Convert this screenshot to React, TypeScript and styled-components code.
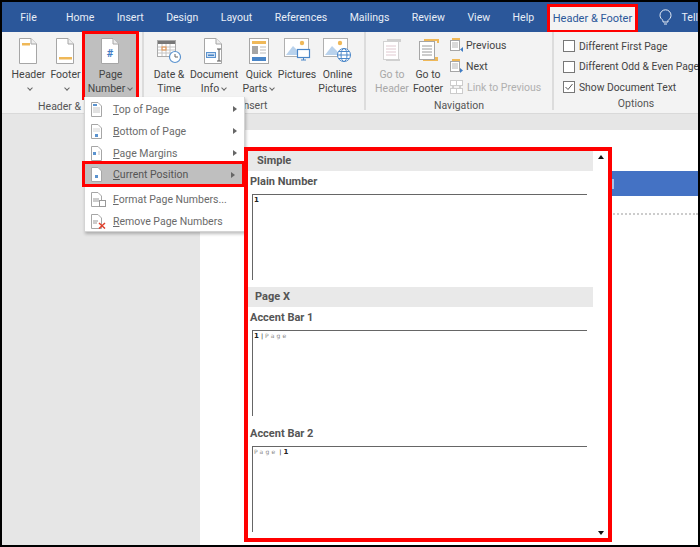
import React from 'react';
import styled, { createGlobalStyle } from 'styled-components';

const GlobalStyle = createGlobalStyle`
  html, body {
    margin: 0;
    padding: 0;
    background: #000;
  }
`;

const Frame = styled.div`
  position: relative;
  box-sizing: border-box;
  width: 700px;
  height: 547px;
  border: 2px solid #000;
  overflow: hidden;
  display: flex;
  flex-direction: column;
  font-family: Roboto, 'Liberation Sans', sans-serif;
  font-size: 10.5px;
  color: #444;
`;

const TabBar = styled.div`
  display: flex;
  align-items: stretch;
  height: 30px;
  flex: none;
  padding-left: 7px;
  background: #2b579a;
`;

const Tab = styled.div<{ $first?: boolean }>`
  display: flex;
  align-items: center;
  padding: 0 ${(p) => (p.$first ? '18px' : '11.25px')} 0 11.25px;
  color: #e8eef7;
  font-size: 10.5px;
  white-space: nowrap;
`;

const ActiveTab = styled.div`
  box-sizing: border-box;
  display: flex;
  align-items: center;
  justify-content: center;
  width: 103px;
  height: 28px;
  margin: 2px 0 0 2px;
  border: 3px solid #f00;
  border-bottom-width: 2px;
  background: #f3f3f3;
  color: #2b579a;
  font-size: 11px;
  white-space: nowrap;
`;

const TellMe = styled.div`
  display: flex;
  align-items: center;
  gap: 10px;
  margin-left: 21px;
  color: #e8eef7;
`;

const Ribbon = styled.div`
  display: flex;
  flex: none;
  height: 81px;
  background: #f3f3f3;
  border-bottom: 1px solid #d9d9d9;
`;

const Group = styled.div<{ $width: number }>`
  display: flex;
  flex-direction: column;
  flex: none;
  box-sizing: border-box;
  width: ${(p) => p.$width}px;
  border-right: 2px solid #dcdcdc;
  margin-bottom: 3px;
`;

const GroupBody = styled.div<{ $pad: number }>`
  display: flex;
  height: 65px;
  padding-left: ${(p) => p.$pad}px;
`;

const GroupLabel = styled.div<{ $offset?: number }>`
  padding: 3px 0 0 ${(p) => p.$offset ?? 0}px;
  text-align: center;
  line-height: 14px;
  font-size: 10.5px;
  color: #555;
  white-space: nowrap;
`;

const BigButton = styled.div<{ $width: number; $disabled?: boolean; $active?: boolean }>`
  box-sizing: border-box;
  flex: none;
  display: flex;
  flex-direction: column;
  align-items: center;
  width: ${(p) => p.$width}px;
  padding-top: 6px;
  color: ${(p) => (p.$disabled ? '#a8a8a8' : '#444')};
  ${(p) =>
    p.$active &&
    `
    height: 69px;
    margin: -1px 0 0 -2px;
    padding-top: 4px;
    border: 3px solid #f00;
    background: #bfbfbf;
  `}
`;

const IconBox = styled.div`
  display: flex;
  align-items: flex-start;
  justify-content: center;
  height: 30px;
`;

const Label = styled.div`
  line-height: 14px;
  font-size: 10.5px;
  text-align: center;
  white-space: nowrap;
`;

const Chevron = styled.span`
  display: inline-block;
  width: 3px;
  height: 3px;
  margin: 0 1px 2px 3px;
  border-right: 1px solid #666;
  border-bottom: 1px solid #666;
  transform: rotate(45deg);
`;

const SmallColumn = styled.div`
  display: flex;
  flex-direction: column;
  gap: 7px;
  padding: 6px 0 0 4px;
`;

const SmallButton = styled.div<{ $disabled?: boolean }>`
  display: flex;
  align-items: center;
  gap: 3px;
  height: 14px;
  font-size: 10.5px;
  white-space: nowrap;
  color: ${(p) => (p.$disabled ? '#b0b0b0' : '#444')};
`;

const OptionColumn = styled.div`
  display: flex;
  flex-direction: column;
  gap: 6.5px;
  padding-top: 7px;
`;

const OptionRow = styled.div`
  display: flex;
  align-items: center;
  gap: 4px;
  height: 14px;
  font-size: 10.3px;
  white-space: nowrap;
`;

const CheckBox = styled.span`
  box-sizing: border-box;
  display: flex;
  align-items: center;
  justify-content: center;
  width: 12px;
  height: 12px;
  border: 1px solid #777;
  background: #fff;
`;

const Workspace = styled.div`
  flex: 1;
  display: flex;
  padding: 16px 0 0 198px;
  background: #e6e6e6;
`;

const Page = styled.div`
  flex: 1;
  padding-top: 41px;
  background: #fff;
`;

const HeaderBand = styled.div`
  display: flex;
  align-items: center;
  height: 25px;
  margin-left: 50px;
  padding-left: 362px;
  background: #4472c4;
`;

const BandMark = styled.span`
  width: 2px;
  height: 10px;
  background: #a9c1e6;
`;

const DottedRule = styled.div`
  margin-top: 17px;
  margin-left: 50px;
  border-top: 2px dotted #ccc;
`;

const Menu = styled.div`
  position: absolute;
  left: 82px;
  top: 95px;
  box-sizing: border-box;
  width: 161px;
  height: 135px;
  padding-top: 1px;
  background: #fff;
  border: 1px solid #d4d4d4;
  border-width: 0 1px 1px 1px;
  box-shadow: 1px 2px 3px rgba(0, 0, 0, 0.25);
`;

const MenuRow = styled.div<{ $active?: boolean }>`
  box-sizing: border-box;
  display: flex;
  align-items: center;
  height: 22px;
  padding: 0 7px 0 5px;
  color: #6a6a6a;
  font-size: 10.5px;
  white-space: nowrap;
  ${(p) =>
    p.$active &&
    `
    position: relative;
    height: 26px;
    margin: -3px -1px -1px -3px;
    padding: 1px 7px 0 5px;
    border: 3px solid #f00;
    background: #bfbfbf;
    color: #555;
  `}
`;

const MenuIcon = styled.span`
  display: flex;
  justify-content: flex-start;
  width: 17px;
  margin-right: 6px;
`;

const MenuText = styled.span`
  flex: 1;
`;

const Mnemonic = styled.span`
  text-decoration: underline;
`;

const MenuArrow = styled.span`
  width: 0;
  height: 0;
  border-left: 4px solid #666;
  border-top: 3px solid transparent;
  border-bottom: 3px solid transparent;
`;

const MenuSeparator = styled.div`
  height: 2px;
`;

const Gallery = styled.div`
  position: absolute;
  left: 242px;
  top: 145px;
  box-sizing: border-box;
  width: 368px;
  height: 395px;
  display: grid;
  grid-template-columns: 345px 15px;
  border: 4px solid #f00;
  background: #fff;
`;

const GalleryList = styled.div`
  display: flex;
  flex-direction: column;
`;

const SectionHead = styled.div<{ $indent: number }>`
  flex: none;
  height: 20px;
  line-height: 20px;
  padding-left: ${(p) => p.$indent}px;
  background: #e9e9e9;
  color: #555;
  font-size: 11px;
  font-weight: 700;
`;

const Entry = styled.div`
  flex: none;
  margin-bottom: 7px;
`;

const EntryTitle = styled.div`
  height: 23px;
  line-height: 22px;
  padding-left: 2px;
  color: #555;
  font-size: 11px;
  font-weight: 700;
`;

const Preview = styled.div`
  box-sizing: border-box;
  height: 86px;
  margin: 0 6px 0 4px;
  padding: 1px 0 0 1px;
  border-top: 1px solid #666;
  border-left: 1px solid #666;
  font-family: 'DejaVu Sans', sans-serif;
  font-size: 6px;
  line-height: 8px;
`;

const PageNum = styled.b`
  color: #222;
  font-size: 7px;
`;

const PageWord = styled.span`
  color: #888;
  letter-spacing: 2.2px;
`;

const Bar = styled.b`
  margin: 0 2px;
  color: #555;
`;

const ScrollColumn = styled.div`
  display: flex;
  flex-direction: column;
  justify-content: space-between;
  align-items: center;
  padding: 4px 0 4px;
`;

const ScrollArrow = styled.span<{ $down?: boolean }>`
  width: 0;
  height: 0;
  border-left: 3.5px solid transparent;
  border-right: 3.5px solid transparent;
  ${(p) => (p.$down ? 'border-top: 4px solid #111;' : 'border-bottom: 4px solid #111;')}
`;

const sheet = { fill: '#fff', stroke: '#a6a6a6', strokeWidth: 1 };

const DocShape = ({ w = 18, h = 26 }: { w?: number; h?: number }) => (
  <>
    <path d={`M.5 .5H${w - 6}L${w - 0.5} 6V${h - 0.5}H.5Z`} {...sheet} />
    <path d={`M${w - 6} .5V6H${w - 0.5}`} fill="#eee" stroke="#a6a6a6" />
  </>
);

const HeaderIcon = () => (
  <svg width="19" height="27">
    <DocShape />
    <rect x="3" y="5" width="8" height="2.5" fill="#efb858" />
  </svg>
);

const FooterIcon = () => (
  <svg width="19" height="27">
    <DocShape />
    <rect x="3" y="19" width="13" height="2.5" fill="#efb858" />
  </svg>
);

const PageNumberIcon = () => (
  <svg width="19" height="27">
    <DocShape />
    <text x="9" y="19" textAnchor="middle" fontSize="11" fontWeight="700" fontFamily="Roboto" fill="#3f7cc4">
      #
    </text>
  </svg>
);

const CalendarIcon = () => (
  <svg width="25" height="27">
    <rect x=".5" y="2.5" width="18" height="16" fill="#fff" stroke="#aaa" />
    <rect x="1" y="3" width="17" height="3" fill="#777" />
    <path d="M1 9H18M1 12H18M1 15H18M5 6V18M9 6V18M13 6V18" stroke="#c4c4c4" />
    <rect x="5" y="9" width="4" height="3" fill="none" stroke="#e9934a" />
    <circle cx="18" cy="19" r="5.5" fill="#fff" stroke="#5b93cf" strokeWidth="1.2" />
    <path d="M18 16V19H21" fill="none" stroke="#666" />
  </svg>
);

const DocInfoIcon = () => (
  <svg width="20" height="27">
    <DocShape />
    <rect x="2.5" y="14.5" width="9" height="5" fill="#cfe0f3" stroke="#5b93cf" />
    <rect x="4" y="16.5" width="6" height="1.5" fill="#4a86c8" />
    <path d="M15 11V23M13 11H17M13 23H17" stroke="#555" fill="none" />
  </svg>
);

const QuickPartsIcon = () => (
  <svg width="21" height="27">
    <rect x=".5" y=".5" width="19" height="25" fill="#fff" stroke="#a6a6a6" />
    <rect x="3" y="3" width="14" height="3" fill="#efb858" />
    <rect x="3" y="8" width="6" height="8" fill="#a6a6a6" />
    <path d="M11 9H17M11 12H17M11 15H17" stroke="#bbb" />
    <rect x="3" y="19" width="14" height="4" fill="#4a86c8" />
  </svg>
);

const PicturesIcon = () => (
  <svg width="27" height="25">
    <rect x=".5" y=".5" width="24" height="18" fill="#fff" stroke="#b0b0b0" />
    <circle cx="18" cy="5" r="2.2" fill="#efb858" />
    <path d="M2 17L9 8L14 13L17 17Z" fill="#b9d2ec" />
    <rect x="13.5" y="11.5" width="12" height="8" fill="#fff" stroke="#4a86c8" strokeWidth="1.2" />
    <path d="M17 22H22M19.5 20V22" stroke="#4a86c8" />
  </svg>
);

const OnlinePicturesIcon = () => (
  <svg width="30" height="25">
    <rect x=".5" y=".5" width="24" height="18" fill="#fff" stroke="#b0b0b0" />
    <circle cx="17" cy="5" r="2.2" fill="#efb858" />
    <path d="M2 17L9 8L14 13L17 17Z" fill="#b9d2ec" />
    <circle cx="21" cy="17" r="6.5" fill="#fff" stroke="#4a86c8" />
    <ellipse cx="21" cy="17" rx="3" ry="6.5" fill="none" stroke="#4a86c8" />
    <path d="M14.5 17H27.5M16 13.5H26M16 20.5H26" stroke="#4a86c8" fill="none" />
  </svg>
);

const GoToIcon = ({ muted }: { muted?: boolean }) => {
  const edge = muted ? '#d2d2d2' : '#a6a6a6';
  const strip = muted ? '#d0d0d0' : '#efb858';
  const line = muted ? '#e0c9d0' : '#9a9a9a';
  return (
    <svg width="21" height="25">
      {muted ? (
        <rect x="5" y="1" width="14" height="3" fill={strip} />
      ) : (
        <rect x="5" y="19" width="15" height="4" fill={strip} />
      )}
      {!muted && <path d="M6 2H20V5" fill="none" stroke={strip} strokeWidth="2" />}
      <rect x="1.5" y="3.5" width="15" height="18" fill="#fff" stroke={edge} />
      <path d="M4 8H14M4 11H14M4 14H14M4 17H14" stroke={line} />
      {muted && <rect x="4" y="21" width="14" height="2" fill={strip} />}
    </svg>
  );
};

const PrevNextIcon = ({ down }: { down?: boolean }) => (
  <svg width="13" height="14">
    <rect x="2" y="0" width="8" height="3" fill="#efb858" />
    <rect x=".5" y="2.5" width="9" height="10" fill="#fff" stroke="#a6a6a6" />
    <path d="M2 5H8M2 7H8M2 9H8" stroke="#b5b5b5" />
    <path d={down ? 'M10 9L13 11.5L10 14Z' : 'M13 9L10 11.5L13 14Z'} fill="#3f7cc4" />
  </svg>
);

const LinkIcon = () => (
  <svg width="14" height="14">
    <rect x=".5" y=".5" width="12" height="5" fill="#fff" stroke="#ccc" />
    <rect x=".5" y="8.5" width="12" height="5" fill="#fff" stroke="#ccc" />
    <path d="M6.5 1V5M6.5 9V13" stroke="#ccc" />
    <path d="M3 6V8M10 6V8" stroke="#aaa" />
  </svg>
);

const BulbIcon = () => (
  <svg width="13" height="17" fill="none" stroke="#e8eef7">
    <path d="M4 11.5C2.5 10 1 8.8 1 6.3A5.5 5.5 0 0 1 12 6.3C12 8.8 10.5 10 9 11.5V13H4Z" />
    <path d="M5 15H8" />
  </svg>
);

const MiniDoc = ({ kind }: { kind: 'top' | 'bottom' | 'side' | 'mid' | 'format' | 'remove' }) => (
  <svg width="17" height="15">
    <path d="M1.5 .5H8L11.5 4V14.5H1.5Z" fill="#fff" stroke="#a6a6a6" />
    {kind === 'top' && (
      <>
        <rect x="3" y="2" width="4" height="2" fill="#5b93cf" />
        <path d="M3 6H10M3 8H10M3 10H10" stroke="#c4c4c4" />
      </>
    )}
    {kind === 'bottom' && (
      <>
        <path d="M3 5H10M3 7H10" stroke="#d4d4d4" />
        <rect x="5" y="10" width="3" height="3" fill="#5b93cf" />
      </>
    )}
    {kind === 'side' && (
      <>
        <rect x="3" y="6" width="3" height="3" fill="#5b93cf" />
        <path d="M8 6H10M8 8H10" stroke="#c4c4c4" />
      </>
    )}
    {kind === 'mid' && <rect x="5" y="8" width="3" height="3" fill="#5b93cf" />}
    {kind === 'format' && (
      <>
        <path d="M3 7H9M3 9H9" stroke="#999" />
        <rect x="9.5" y="8.5" width="6" height="6" fill="#fff" stroke="#999" />
      </>
    )}
    {kind === 'remove' && (
      <>
        <path d="M3 7H8M3 9H7" stroke="#999" />
        <path d="M9 9L15 14.5M15 9L9 14.5" stroke="#e0402c" strokeWidth="1.5" />
      </>
    )}
  </svg>
);

const tabs = ['Home', 'Insert', 'Design', 'Layout', 'References', 'Mailings', 'Review', 'View', 'Help'];

const App = () => {
  return (
    <Frame>
      <GlobalStyle />
      <TabBar>
        <Tab $first>File</Tab>
        {tabs.map((t) => (
          <Tab key={t}>{t}</Tab>
        ))}
        <ActiveTab>Header &amp; Footer</ActiveTab>
        <TellMe>
          <BulbIcon />
          Tell
        </TellMe>
      </TabBar>

      <Ribbon>
        <Group $width={142}>
          <GroupBody $pad={8}>
            <BigButton $width={37}>
              <IconBox>
                <HeaderIcon />
              </IconBox>
              <Label>Header</Label>
              <Label>
                <Chevron />
              </Label>
            </BigButton>
            <BigButton $width={37}>
              <IconBox>
                <FooterIcon />
              </IconBox>
              <Label>Footer</Label>
              <Label>
                <Chevron />
              </Label>
            </BigButton>
            <BigButton $width={57} $active>
              <IconBox>
                <PageNumberIcon />
              </IconBox>
              <Label>Page</Label>
              <Label>
                Number
                <Chevron />
              </Label>
            </BigButton>
          </GroupBody>
          <GroupLabel $offset={8}>Header &amp; Footer</GroupLabel>
        </Group>

        <Group $width={222}>
          <GroupBody $pad={6}>
            <BigButton $width={38}>
              <IconBox>
                <CalendarIcon />
              </IconBox>
              <Label>Date &amp;</Label>
              <Label>Time</Label>
            </BigButton>
            <BigButton $width={52}>
              <IconBox>
                <DocInfoIcon />
              </IconBox>
              <Label>Document</Label>
              <Label>
                Info
                <Chevron />
              </Label>
            </BigButton>
            <BigButton $width={38}>
              <IconBox>
                <QuickPartsIcon />
              </IconBox>
              <Label>Quick</Label>
              <Label>
                Parts
                <Chevron />
              </Label>
            </BigButton>
            <BigButton $width={38}>
              <IconBox>
                <PicturesIcon />
              </IconBox>
              <Label>Pictures</Label>
            </BigButton>
            <BigButton $width={43}>
              <IconBox>
                <OnlinePicturesIcon />
              </IconBox>
              <Label>Online</Label>
              <Label>Pictures</Label>
            </BigButton>
          </GroupBody>
          <GroupLabel>Insert</GroupLabel>
        </Group>

        <Group $width={188}>
          <GroupBody $pad={8}>
            <BigButton $width={36} $disabled>
              <IconBox>
                <GoToIcon muted />
              </IconBox>
              <Label>Go to</Label>
              <Label>Header</Label>
            </BigButton>
            <BigButton $width={36}>
              <IconBox>
                <GoToIcon />
              </IconBox>
              <Label>Go to</Label>
              <Label>Footer</Label>
            </BigButton>
            <SmallColumn>
              <SmallButton>
                <PrevNextIcon />
                Previous
              </SmallButton>
              <SmallButton>
                <PrevNextIcon down />
                Next
              </SmallButton>
              <SmallButton $disabled>
                <LinkIcon />
                Link to Previous
              </SmallButton>
            </SmallColumn>
          </GroupBody>
          <GroupLabel>Navigation</GroupLabel>
        </Group>

        <Group $width={166}>
          <GroupBody $pad={9}>
            <OptionColumn>
              <OptionRow>
                <CheckBox />
                Different First Page
              </OptionRow>
              <OptionRow>
                <CheckBox />
                Different Odd &amp; Even Page
              </OptionRow>
              <OptionRow>
                <CheckBox>
                  <svg width="10" height="10" fill="none" stroke="#555">
                    <path d="M1.5 5L4 7.5L8.5 2" />
                  </svg>
                </CheckBox>
                Show Document Text
              </OptionRow>
            </OptionColumn>
          </GroupBody>
          <GroupLabel>Options</GroupLabel>
        </Group>
      </Ribbon>

      <Workspace>
        <Page>
          <HeaderBand>
            <BandMark />
          </HeaderBand>
          <DottedRule />
        </Page>
      </Workspace>

      <Menu>
        <MenuRow>
          <MenuIcon>
            <MiniDoc kind="top" />
          </MenuIcon>
          <MenuText>
            <Mnemonic>T</Mnemonic>op of Page
          </MenuText>
          <MenuArrow />
        </MenuRow>
        <MenuRow>
          <MenuIcon>
            <MiniDoc kind="bottom" />
          </MenuIcon>
          <MenuText>
            <Mnemonic>B</Mnemonic>ottom of Page
          </MenuText>
          <MenuArrow />
        </MenuRow>
        <MenuRow>
          <MenuIcon>
            <MiniDoc kind="side" />
          </MenuIcon>
          <MenuText>
            <Mnemonic>P</Mnemonic>age Margins
          </MenuText>
          <MenuArrow />
        </MenuRow>
        <MenuRow $active>
          <MenuIcon>
            <MiniDoc kind="mid" />
          </MenuIcon>
          <MenuText>
            <Mnemonic>C</Mnemonic>urrent Position
          </MenuText>
          <MenuArrow />
        </MenuRow>
        <MenuSeparator />
        <MenuRow>
          <MenuIcon>
            <MiniDoc kind="format" />
          </MenuIcon>
          <MenuText>
            <Mnemonic>F</Mnemonic>ormat Page Numbers...
          </MenuText>
        </MenuRow>
        <MenuRow>
          <MenuIcon>
            <MiniDoc kind="remove" />
          </MenuIcon>
          <MenuText>
            <Mnemonic>R</Mnemonic>emove Page Numbers
          </MenuText>
        </MenuRow>
      </Menu>

      <Gallery>
        <GalleryList>
          <SectionHead $indent={9}>Simple</SectionHead>
          <Entry>
            <EntryTitle>Plain Number</EntryTitle>
            <Preview>
              <PageNum>1</PageNum>
            </Preview>
          </Entry>
          <SectionHead $indent={7}>Page X</SectionHead>
          <Entry>
            <EntryTitle>Accent Bar 1</EntryTitle>
            <Preview>
              <PageNum>1</PageNum>
              <Bar>|</Bar>
              <PageWord>Page</PageWord>
            </Preview>
          </Entry>
          <Entry>
            <EntryTitle>Accent Bar 2</EntryTitle>
            <Preview>
              <PageWord>Page</PageWord>
              <Bar>|</Bar>
              <PageNum>1</PageNum>
            </Preview>
          </Entry>
        </GalleryList>
        <ScrollColumn>
          <ScrollArrow />
          <ScrollArrow $down />
        </ScrollColumn>
      </Gallery>
    </Frame>
  );
};

export default App;
